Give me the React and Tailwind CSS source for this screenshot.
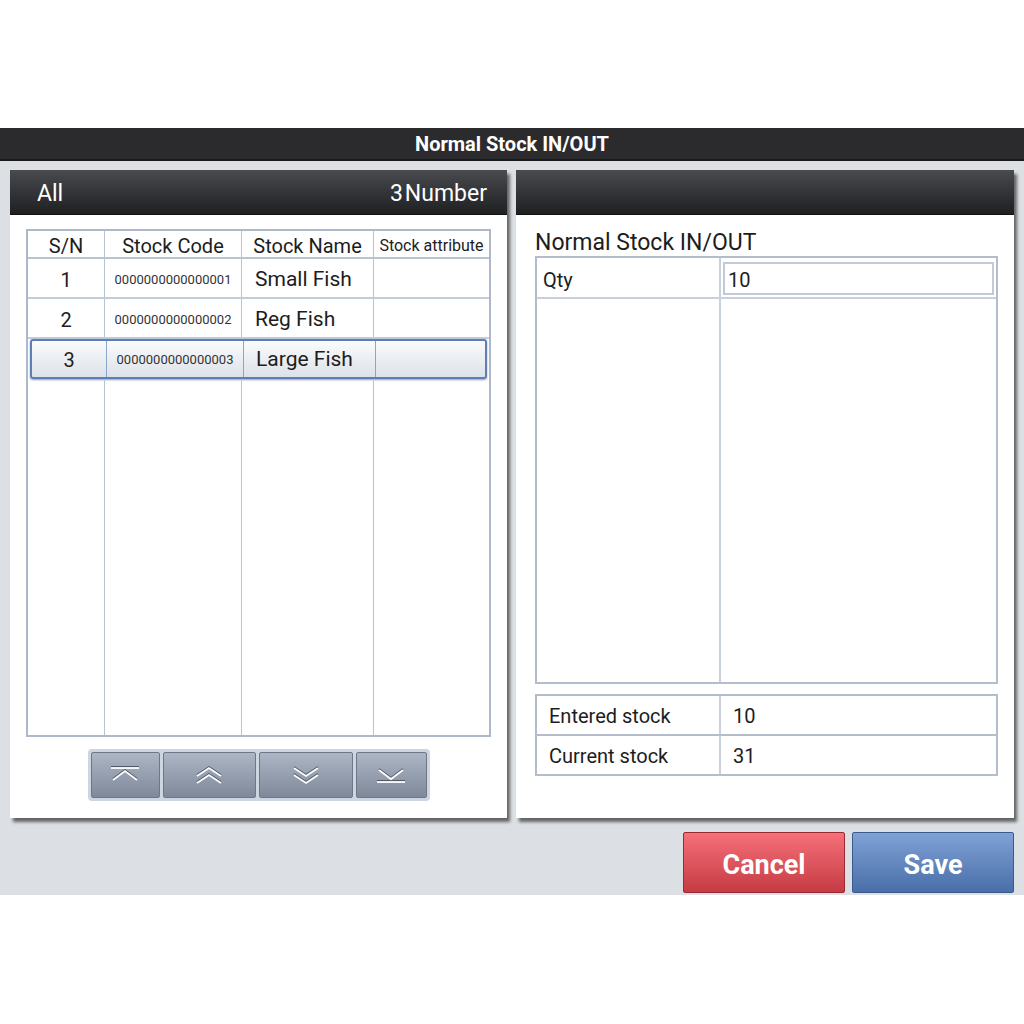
import React from "react";

const rows = [
  { sn: "1", code: "0000000000000001", name: "Small Fish" },
  { sn: "2", code: "0000000000000002", name: "Reg Fish" },
  { sn: "3", code: "0000000000000003", name: "Large Fish", selected: true },
];

function NavIcon({ kind }) {
  // white chevrons with a dark etched shadow, like the tablet skin
  const paths = {
    top: ["M2 4h28", "M4 16l12-9 12 9"],
    up: ["M4 12l12-8 12 8", "M4 19l12-8 12 8"],
    down: ["M4 4l12 8 12-8", "M4 11l12 8 12-8"],
    bottom: ["M4 6l12 9 12-9", "M2 18h28"],
  }[kind];
  return (
    <svg width="32" height="22" viewBox="0 0 32 22" fill="none" strokeWidth="1.8">
      {paths.map((d, i) => (
        <path key={"s" + i} d={d} stroke="#4b5363" transform="translate(0 -1)" />
      ))}
      {paths.map((d, i) => (
        <path key={i} d={d} stroke="#ffffff" />
      ))}
    </svg>
  );
}

function PanelHeader({ children }) {
  return (
    <div className="h-[45px] flex items-center justify-between pl-[27px] pr-[20px] pt-[5px] text-white text-[23px] bg-gradient-to-b from-[#4a4b4f] to-[#1f2022] border-b border-[#111]">
      {children}
    </div>
  );
}

export default function App() {
  return (
    <div className="w-[1024px] h-[1024px] bg-white" style={{ fontFamily: "Roboto, 'Liberation Sans', sans-serif" }}>
      <div className="h-[128px]" />
      <div className="h-[33px] bg-[#2b2b2d] border-b-2 border-[#1a1a1a] flex items-center justify-center text-white font-bold text-[20px] pt-[1px]">
        Normal Stock IN/OUT
      </div>

      <div className="h-[734px] bg-[#dcdfe3] pt-[9px] px-[10px]">
        <div className="flex gap-[9px] h-[648px]">
          {/* left panel */}
          <div className="w-[497px] bg-white flex flex-col shadow-[3px_4px_3px_rgba(0,0,0,0.55)]">
            <PanelHeader>
              <span>All</span>
              <span>3<span className="ml-[2px]">Number</span></span>
            </PanelHeader>
            <div className="flex-1 flex flex-col items-center pt-[14px] pb-[16px]">
              <div className="w-[465px] h-[508px] border-2 border-[#aeb8c8] flex flex-col text-[#1d1d1d]">
                <div className="grid grid-cols-[76px_137px_132px_1fr] h-[28px] border-b-2 border-[#b8c3d3] text-[20px] items-center">
                  <div className="h-full flex items-center justify-center">S/N</div>
                  <div className="border-l border-[#b8c3d3] h-full flex items-center justify-center">Stock Code</div>
                  <div className="border-l border-[#b8c3d3] h-full flex items-center justify-center">Stock Name</div>
                  <div className="text-[16px] border-l border-[#b8c3d3] h-full flex items-center justify-center whitespace-nowrap">Stock attribute</div>
                </div>
                {rows.map((r) =>
                  r.selected ? (
                    <div key={r.sn} className="grid grid-cols-[74px_137px_132px_1fr] h-[40px] mx-[2px] border-2 border-[#5b7fb6] rounded-[3px] bg-gradient-to-b from-[#fafbfc] to-[#dde2e9] items-center shadow-[0_1px_2px_rgba(40,60,100,0.5)]">
                      <div className="text-center text-[20px] pt-[2px]">{r.sn}</div>
                      <div className="h-full flex items-center justify-center border-l border-[#8aa6cf] text-[13px] text-[#333] pt-[2px]">{r.code}</div>
                      <div className="h-full flex items-center pl-[12px] border-l border-[#8aa6cf] text-[21px] pt-[2px]">{r.name}</div>
                      <div className="h-full border-l border-[#8aa6cf]" />
                    </div>
                  ) : (
                    <div key={r.sn} className="grid grid-cols-[76px_137px_132px_1fr] h-[40px] border-b-2 border-[#c3ccd9] items-center">
                      <div className="text-center text-[20px] pt-[3px]">{r.sn}</div>
                      <div className="h-full flex items-center justify-center border-l border-[#b8c3d3] text-[13px] text-[#333] pt-[3px]">{r.code}</div>
                      <div className="h-full flex items-center pl-[13px] border-l border-[#b8c3d3] text-[21px] pt-[3px]">{r.name}</div>
                      <div className="h-full border-l border-[#b8c3d3]" />
                    </div>
                  )
                )}
                <div className="flex-1 grid grid-cols-[76px_137px_132px_1fr]">
                  <div />
                  <div className="border-l border-[#b8c3d3]" />
                  <div className="border-l border-[#b8c3d3]" />
                  <div className="border-l border-[#b8c3d3]" />
                </div>
              </div>

              <div className="mt-[12px] flex gap-[3px] p-[3px] bg-[#cdd5e0] rounded-[4px]">
                {[
                  ["top", "w-[69px]"],
                  ["up", "w-[93px]"],
                  ["down", "w-[94px]"],
                  ["bottom", "w-[71px]"],
                ].map(([k, w]) => (
                  <button
                    key={k}
                    className={`${w} h-[46px] flex items-center justify-center rounded-[2px] border border-[#6e7787] bg-gradient-to-b from-[#adb6c4] to-[#7f899a]`}
                  >
                    <NavIcon kind={k} />
                  </button>
                ))}
              </div>
            </div>
          </div>

          {/* right panel */}
          <div className="w-[498px] bg-white flex flex-col shadow-[3px_4px_3px_rgba(0,0,0,0.55)]">
            <PanelHeader />
            <div className="flex-1 pl-[19px] pt-[15px] text-[#1d1d1d]">
              <div className="text-[23px] leading-[26px]">Normal Stock IN/OUT</div>
              <div className="w-[463px] h-[428px] border-2 border-[#b3bdcc] flex flex-col">
                <div className="flex h-[41px] border-b-2 border-[#c8d0dc]">
                  <div className="w-[182px] flex items-center pl-[6px] pt-[4px] text-[20px]">Qty</div>
                  <div className="flex-1 border-l-2 border-[#c8d0dc] pl-[2px] pr-[2px] pt-[4px] pb-[2px]">
                    <div className="h-full border-2 border-[#c3cad6] flex items-center pl-[3px] pt-[2px] text-[20px]">10</div>
                  </div>
                </div>
                <div className="flex-1 flex">
                  <div className="w-[182px]" />
                  <div className="flex-1 border-l-2 border-[#c8d0dc]" />
                </div>
              </div>

              <div className="mt-[10px] w-[463px] border-2 border-[#b3bdcc] text-[20px]">
                <div className="flex h-[40px] border-b-2 border-[#b3bdcc]">
                  <div className="w-[182px] flex items-center pl-[12px] pt-[2px]">Entered stock</div>
                  <div className="flex-1 border-l-2 border-[#c8d0dc] flex items-center pl-[12px] pt-[2px]">10</div>
                </div>
                <div className="flex h-[38px]">
                  <div className="w-[182px] flex items-center pl-[12px] pt-[2px]">Current stock</div>
                  <div className="flex-1 border-l-2 border-[#c8d0dc] flex items-center pl-[12px] pt-[2px]">31</div>
                </div>
              </div>
            </div>
          </div>
        </div>

        <div className="flex justify-end gap-[7px] mt-[14px]">
          <button className="w-[162px] h-[61px] pt-[5px] rounded-[2px] border border-[#9b2a30] bg-gradient-to-b from-[#f5707a] to-[#c63a43] text-white font-bold text-[27px]">
            Cancel
          </button>
          <button className="w-[162px] h-[61px] pt-[5px] rounded-[2px] border border-[#3a5a8c] bg-gradient-to-b from-[#7fa2d6] to-[#4a6ea8] text-white font-bold text-[27px]">
            Save
          </button>
        </div>
      </div>
    </div>
  );
}
